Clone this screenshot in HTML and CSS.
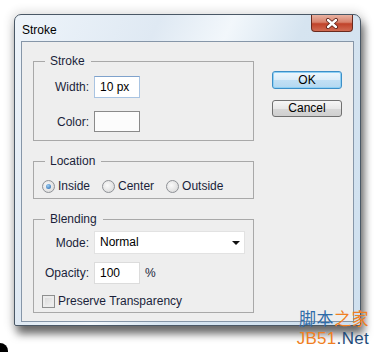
FILE: index.html
```html
<!DOCTYPE html>
<html>
  <head>
    <title>Stroke</title>
    <link rel="stylesheet" href="styles.css">
  </head>
  <body>
    <div class="screen">
      <div class="window">
        <div class="title-bar">
          <span class="title">Stroke</span>
          <div class="close">
            <svg width="14" height="11" viewBox="0 0 14 11">
              <path d="M3 2 L11 9 M11 2 L3 9" stroke="#5a1e14" stroke-width="4" stroke-linecap="round"/>
              <path d="M3 2 L11 9 M11 2 L3 9" stroke="#ffffff" stroke-width="2.4" stroke-linecap="round"/>
            </svg>
          </div>
        </div>

        <div class="client">
          <div class="groups">
            <fieldset class="group group-stroke">
              <legend>Stroke</legend>
              <div class="row">
                <span class="label">Width:</span>
                <span class="field field-focus">10 px</span>
              </div>
              <div class="row row-color">
                <span class="label">Color:</span>
                <span class="swatch"></span>
              </div>
            </fieldset>

            <fieldset class="group group-location">
              <legend>Location</legend>
              <div class="radios">
                <span class="option"><span class="radio checked"></span>Inside</span>
                <span class="option"><span class="radio"></span>Center</span>
                <span class="option"><span class="radio"></span>Outside</span>
              </div>
            </fieldset>

            <fieldset class="group group-blending">
              <legend>Blending</legend>
              <div class="row">
                <span class="label">Mode:</span>
                <span class="select">Normal<span class="arrow"></span></span>
              </div>
              <div class="row row-opacity">
                <span class="label">Opacity:</span>
                <span class="field">100</span>
                <span class="unit">%</span>
              </div>
              <div class="option check-row"><span class="checkbox"></span>Preserve Transparency</div>
            </fieldset>
          </div>

          <div class="buttons">
            <div class="btn btn-default">OK</div>
            <div class="btn">Cancel</div>
          </div>
        </div>
      </div>

      <div class="watermark">
        <div class="wm-cn"><span class="wm-blue">脚本</span><span class="wm-orange">之家</span></div>
        <div class="wm-en"><span class="wm-orange">JB51</span><span class="wm-navy">.Net</span></div>
      </div>
      <div class="corner"></div>
    </div>
  </body>
</html>
```

FILE: styles.css
```css
body {
  margin: 0;
  background: #fff;
  font-family: "Liberation Sans", Arial, sans-serif;
  font-size: 12px;
  color: #1a1f3a;
}

.screen {
  position: relative;
  width: 379px;
  height: 352px;
  overflow: hidden;
  padding: 14px 0 0 14px;
  box-sizing: border-box;
}

/* window frame */
.window {
  width: 347px;
  height: 312px;
  box-sizing: border-box;
  border: 1px solid #4a5866;
  border-radius: 7px 7px 2px 2px;
  background: linear-gradient(115deg, #eef4fa 0%, #dfe9f3 30%, #f2f7fb 45%, #d6e4f0 60%, #cfe0ef 100%);
  box-shadow: 0 0 10px 3px rgba(0, 0, 0, 0.12), 3px 8px 9px rgba(0, 0, 0, 0.55);
  display: flex;
  flex-direction: column;
}
.title-bar {
  height: 26px;
  display: flex;
  align-items: flex-start;
  padding-left: 7px;
}
.title-bar .title {
  margin-top: 8px;
  line-height: 14px;
  color: #000;
}
.close {
  margin-left: auto;
  margin-right: 7px;
  width: 42px;
  height: 17px;
  box-sizing: border-box;
  border: 1px solid #6a2a1e;
  border-top: none;
  border-radius: 0 0 4px 4px;
  background: linear-gradient(180deg, #e9b2a2 0%, #d8826c 45%, #c0432a 55%, #d16b52 100%);
  display: flex;
  align-items: center;
  justify-content: center;
}

.client {
  margin: 0 6px;
  height: 281px;
  box-sizing: border-box;
  border: 1px solid #8696a8;
  background: #eeeeee;
  display: flex;
  padding: 12px 0 0 11px;
}

/* group boxes */
.groups {
  width: 221px;
}
.group {
  margin: 0;
  padding: 8px 8px 8px 8px;
  border: 1px solid #a8a8a8;
  min-width: 0;
}
.group + .group {
  margin-top: 13px;
}
.group legend {
  margin-left: 3px;
  padding: 0 6px 0 5px;
  line-height: 14px;
}
.group-location {
  padding-top: 10px;
  padding-bottom: 4px;
}
.group-blending {
  padding-top: 5px;
  padding-bottom: 4px;
}

.row {
  display: flex;
  align-items: center;
}
.row .label {
  width: 47px;
  margin-right: 5px;
  text-align: right;
}
.row-color {
  margin-top: 13px;
}
.row-opacity {
  margin-top: 8px;
}

.field {
  width: 46px;
  height: 22px;
  box-sizing: border-box;
  border: 1px solid #dcdcdc;
  background: #fff;
  padding-left: 5px;
  line-height: 20px;
  color: #000;
}
.field-focus {
  border-color: #a9c4e2;
  border-top-color: #7fa2cc;
}
.swatch {
  width: 46px;
  height: 21px;
  box-sizing: border-box;
  border: 1px solid #8a8a8a;
  background: #fcfcfc;
}
.unit {
  margin-left: 5px;
}

.select {
  width: 151px;
  height: 23px;
  box-sizing: border-box;
  border: 1px solid #e2e2e2;
  background: #fff;
  padding-left: 5px;
  line-height: 21px;
  color: #000;
  display: flex;
  align-items: center;
}
.select .arrow {
  margin-left: auto;
  margin-right: 4px;
  width: 0;
  height: 0;
  border-left: 4px solid transparent;
  border-right: 4px solid transparent;
  border-top: 4px solid #111;
}

/* radios and checkbox */
.radios {
  display: flex;
  gap: 12px;
  height: 16px;
  align-items: center;
}
.option {
  display: flex;
  align-items: center;
}
.radio {
  width: 13px;
  height: 13px;
  box-sizing: border-box;
  border-radius: 50%;
  border: 1px solid #8e9196;
  background: radial-gradient(circle at 40% 40%, #fafafa, #d4d4d4);
  margin-right: 3px;
  display: flex;
  align-items: center;
  justify-content: center;
}
.radio.checked::after {
  content: "";
  width: 5px;
  height: 5px;
  border-radius: 50%;
  background: radial-gradient(circle at 40% 35%, #9fd0f5, #1f5fa8);
}
.check-row {
  margin-top: 10px;
  height: 14px;
}
.checkbox {
  width: 13px;
  height: 13px;
  box-sizing: border-box;
  border: 1px solid #8e8f8f;
  background: linear-gradient(135deg, #d6d6d6, #f4f4f4);
  box-shadow: inset 0 0 0 2px #ececec;
  margin-right: 3px;
}

/* buttons */
.buttons {
  margin-left: 18px;
  padding-top: 17px;
  display: flex;
  flex-direction: column;
  gap: 11px;
}
.btn {
  width: 70px;
  height: 17px;
  box-sizing: border-box;
  border: 1px solid #707070;
  border-radius: 3px;
  background: linear-gradient(180deg, #f6f6f6 0%, #e8e8e8 50%, #d8d8d8 51%, #cfcfcf 100%);
  text-align: center;
  line-height: 15px;
  color: #000;
}
.btn-default {
  height: 18px;
  line-height: 16px;
  border-color: #3c8fc8;
  background: linear-gradient(180deg, #eef7fd 0%, #dcedf9 50%, #c2e0f5 51%, #b4d8f1 100%);
  box-shadow: inset 0 0 0 1px #8fd0f4;
}

/* overlays */
.watermark {
  position: absolute;
  right: 10px;
  top: 309px;
  display: flex;
  flex-direction: column;
  align-items: flex-end;
}
.wm-cn {
  height: 17px;
  font-family: "Noto Sans CJK SC", sans-serif;
  font-size: 17px;
  line-height: 17px;
  letter-spacing: 0.5px;
  white-space: nowrap;
}
.wm-en {
  height: 17px;
  margin-top: 4px;
  font-family: "Liberation Sans", Arial, sans-serif;
  font-size: 17px;
  line-height: 17px;
  letter-spacing: 0.3px;
  white-space: nowrap;
}
.wm-blue {
  color: #2f6ca8;
}
.wm-orange {
  color: #f07f22;
}
.wm-navy {
  color: #1f4c7a;
}
.corner {
  position: absolute;
  left: 0;
  bottom: 0;
  width: 8px;
  height: 9px;
  background: #000;
  border-top-right-radius: 8px;
}
```
